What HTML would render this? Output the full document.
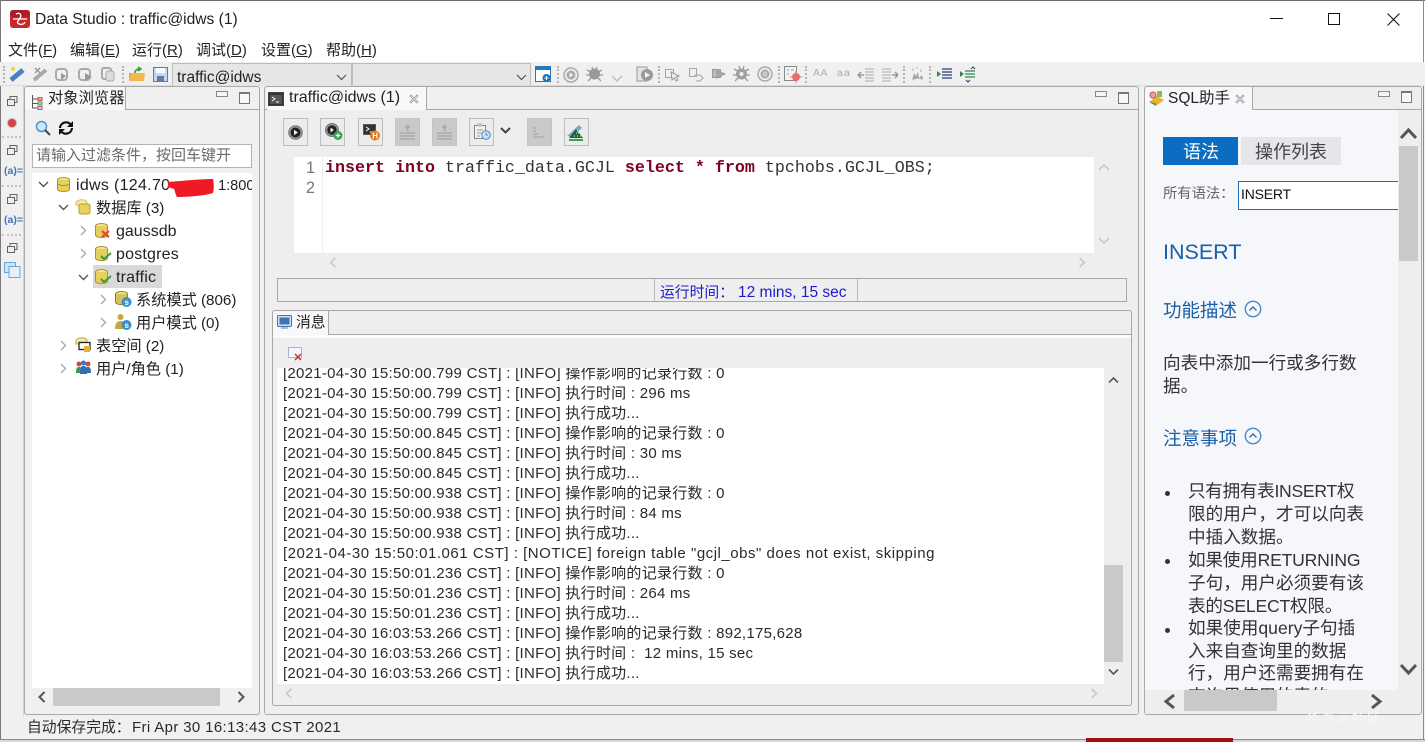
<!DOCTYPE html>
<html lang="zh"><head><meta charset="utf-8"><title>Data Studio</title>
<style>
html,body{margin:0;padding:0;width:1425px;height:742px;overflow:hidden;background:#f0f0f0}
body{position:relative;font-family:"Liberation Sans","Noto Sans CJK SC",sans-serif;font-size:15px;color:#222}
.a{position:absolute}
.t{position:absolute;white-space:nowrap;line-height:20px;height:20px}
.b{position:absolute;box-sizing:border-box;border:1px solid #a8a8a8}
svg{position:absolute;overflow:visible}
.sep{position:absolute;top:66px;width:0;height:17px;border-left:2px dotted #b5b5b5}
.btn{position:absolute;top:118px;width:25px;height:28px;box-sizing:border-box;border:1px solid #bdbdbd;background:#ececec}
.btn.dis{background:#c9c9c9;border-color:#c4c4c4}
.log{position:absolute;left:283px;margin-top:1px;white-space:nowrap;line-height:20px;height:20px;font-size:15px;letter-spacing:.27px;color:#2a2a2a}
.tree{position:absolute;margin-top:1px;white-space:nowrap;line-height:22px;height:22px;font-size:15.2px;color:#222}
.help{position:absolute;margin-top:1px;white-space:nowrap;font-size:17.6px;line-height:23px;color:#333}
.hd{position:absolute;margin-top:1px;white-space:nowrap;font-size:18.5px;line-height:24px;color:#1a5fa8}
.dot{position:absolute;left:1165px;width:5px;height:5px;border-radius:50%;background:#333}
</style></head>
<body>
<!-- window frame -->
<div class="a" style="left:0;top:0;width:1425px;height:1px;background:#6d6d6d"></div>
<div class="a" style="left:0;top:1px;width:1425px;height:61px;background:#fff"></div>
<div class="a" style="left:0;top:0;width:1px;height:742px;background:#7a7a7a"></div>
<div class="a" style="right:1px;top:0;width:1px;height:740px;background:#8a8a8a"></div>
<div class="a" style="left:0;top:739px;width:1425px;height:1px;background:#8a8a8a"></div>
<div class="a" style="left:0;top:740px;width:1425px;height:2px;background:#d8d8d8"></div>
<div class="a" style="left:1086px;top:738px;width:147px;height:4px;background:#a40f12"></div>

<!-- title bar -->
<svg style="left:10px;top:10px" width="20" height="19" viewBox="0 0 20 19"><rect x="0" y="0" width="20" height="18" rx="3" fill="#c8272c"/><rect x="0" y="0" width="20" height="7" rx="3" fill="#a81e22"/><path d="M3 9h14M6 4c4-2 6 1 4 4s-4 5-1 6 5 0 6-2" fill="none" stroke="#fff" stroke-width="1.3"/></svg>
<div class="t" style="left:35px;top:10px;font-size:15.6px">Data Studio : traffic@idws (1)</div>
<div class="a" style="left:1270px;top:18px;width:13px;height:1px;background:#111"></div>
<div class="a" style="left:1328px;top:13px;width:10px;height:10px;border:1px solid #111"></div>
<svg style="left:1387px;top:13px" width="13" height="13"><path d="M0.5 0.5L12.5 12.5M12.5 0.5L0.5 12.5" stroke="#111" stroke-width="1" fill="none"/></svg>

<!-- menu -->
<div class="t" style="left:8px;top:41px">文件(<u>F</u>)</div>
<div class="t" style="left:70px;top:41px">编辑(<u>E</u>)</div>
<div class="t" style="left:132px;top:41px">运行(<u>R</u>)</div>
<div class="t" style="left:196px;top:41px">调试(<u>D</u>)</div>
<div class="t" style="left:261px;top:41px">设置(<u>G</u>)</div>
<div class="t" style="left:326px;top:41px">帮助(<u>H</u>)</div>

<!-- toolbar -->
<div class="a" style="left:0;top:62px;width:1424px;height:23px;background:#f0f0f0"></div>
<div class="a" style="left:0;top:85px;width:1424px;height:1px;background:#dcdcdc"></div>
<div class="sep" style="left:3px"></div>
<svg style="left:9px;top:66px" width="17" height="17"><path d="M2 14L14 4" stroke="#4a7fc0" stroke-width="5"/><circle cx="4" cy="3" r="2" fill="#f4d24a"/></svg>
<svg style="left:32px;top:66px" width="17" height="17"><path d="M2 14L14 4" stroke="#a9a9a9" stroke-width="4"/><path d="M3 2l5 5M8 2L3 7" stroke="#999" stroke-width="1.5"/></svg>
<svg style="left:55px;top:67px" width="16" height="15"><rect x="1" y="2" width="11" height="11" rx="3" fill="none" stroke="#aaa" stroke-width="2"/><path d="M6 6l5 3-5 4z" fill="#999"/></svg>
<svg style="left:78px;top:67px" width="16" height="15"><rect x="1" y="2" width="11" height="11" rx="3" fill="none" stroke="#aaa" stroke-width="2"/><path d="M7 6l7 4-7 4z" fill="#999"/></svg>
<svg style="left:101px;top:67px" width="16" height="15"><rect x="1" y="1" width="9" height="11" rx="2" fill="none" stroke="#aaa" stroke-width="2"/><rect x="5" y="4" width="8" height="10" rx="2" fill="#ddd" stroke="#aaa"/></svg>
<div class="sep" style="left:122px"></div>
<svg style="left:128px;top:66px" width="17" height="16"><path d="M1 7h15v8H1z" fill="#eea128"/><path d="M3 7L1 15h15l1-8z" fill="#f3b84c"/><path d="M7 7c0-3 2-4 5-4M10 1l3 2-3 2" stroke="#3b9a3b" stroke-width="1.5" fill="none"/></svg>
<svg style="left:153px;top:67px" width="15" height="15"><rect x="0.5" y="0.5" width="14" height="14" fill="#c3d7ee" stroke="#5f7ea5"/><rect x="3" y="1" width="9" height="5" fill="#fff"/><rect x="4" y="9" width="7" height="5" fill="#5f7ea5"/></svg>
<div class="a" style="left:172px;top:63px;width:180px;height:23px;box-sizing:border-box;background:#e6e6e6;border:1px solid #bcbcbc;border-bottom:none;overflow:hidden"><div class="t" style="left:4px;top:4px;font-size:15.5px;color:#222">traffic@idws</div></div>
<svg style="left:336px;top:74px" width="11" height="7"><path d="M1 1l4.500 4.500L10 1" fill="none" stroke="#555" stroke-width="1.200"/></svg>
<div class="a" style="left:352px;top:63px;width:179px;height:22px;box-sizing:border-box;background:#e6e6e6;border:1px solid #bcbcbc;border-bottom:none"></div>
<svg style="left:516px;top:74px" width="11" height="7"><path d="M1 1l4.500 4.500L10 1" fill="none" stroke="#555" stroke-width="1.200"/></svg>
<svg style="left:535px;top:66px" width="17" height="17"><rect x="0.500" y="0.500" width="15" height="15" fill="#fff" stroke="#2877b8" stroke-width="1"/><rect x="1" y="1" width="14" height="3" fill="#2877b8"/><circle cx="11.500" cy="12" r="4" fill="#1c77b8"/><path d="M9.500 12h4M11.500 10v4" stroke="#fff"/></svg>
<div class="sep" style="left:557px"></div>
<svg style="left:563px;top:67px" width="16" height="16"><circle cx="8" cy="8" r="7" fill="none" stroke="#a9a9a9" stroke-width="1.500"/><circle cx="8" cy="8" r="4.500" fill="#aaa"/><path d="M6.500 5.500l4 2.500-4 2.500z" fill="#eee"/></svg>
<svg style="left:586px;top:66px" width="17" height="16"><circle cx="8.500" cy="8" r="5.500" fill="#9a9a9a"/><path d="M1 4l4 2M16 4l-4 2M0 9h4M17 9h-4M2 15l3-3M15 15l-3-3M6 1l1 3M11 1l-1 3" stroke="#999" stroke-width="1.300"/></svg>
<svg style="left:611px;top:75px" width="12" height="8"><path d="M1 1l5 5 5-5" fill="none" stroke="#bdbdbd" stroke-width="1.500"/></svg>
<svg style="left:636px;top:66px" width="17" height="17"><rect x="1" y="1" width="10" height="14" fill="#e4e4e4" stroke="#999"/><circle cx="11" cy="9" r="6" fill="#9a9a9a"/><path d="M9 6l5 3-5 3z" fill="#f4f4f4"/></svg>
<div class="sep" style="left:658px"></div>
<svg style="left:665px;top:68px" width="15" height="13"><rect x="0.500" y="1.500" width="8" height="8" fill="none" stroke="#a5a5a5"/><path d="M6 4l8 4-3 1 2 3-2 1-2-3-2 2z" fill="#eee" stroke="#999"/></svg>
<svg style="left:689px;top:68px" width="15" height="14"><rect x="0.500" y="0.500" width="7" height="8" fill="none" stroke="#a5a5a5"/><path d="M5 7h6l3 3-3 3H7" fill="none" stroke="#a5a5a5"/></svg>
<svg style="left:712px;top:68px" width="14" height="12"><rect x="0.500" y="1.500" width="8" height="8" fill="#bbb" stroke="#999"/><path d="M5 3l8 3-8 4z" fill="#aaa" stroke="#999"/></svg>
<svg style="left:733px;top:65px" width="17" height="17"><circle cx="8.500" cy="9" r="5.500" fill="#a0a0a0"/><circle cx="8.500" cy="9" r="2" fill="#eee"/><path d="M1 4l4 2M16 4l-4 2M0 10h4M17 10h-4M2 16l3-3M15 16l-3-3M6 1l1 3M11 1l-1 3" stroke="#999" stroke-width="1.300"/></svg>
<svg style="left:757px;top:66px" width="16" height="16"><circle cx="8" cy="8" r="7" fill="none" stroke="#a9a9a9" stroke-width="1.500"/><circle cx="8" cy="8" r="4.500" fill="#aaa"/><path d="M6.500 5.500h1v5h-1zM8.500 5.500h1v5h-1z" fill="#eee"/></svg>
<div class="sep" style="left:778px"></div>
<svg style="left:784px;top:66px" width="17" height="16"><rect x="0.500" y="0.500" width="12" height="14" fill="#f4f4f4" stroke="#888"/><path d="M3 4h2M3 8h2M7 4h3" stroke="#999"/><circle cx="12" cy="11" r="4" fill="#ea6b6b"/><path d="M12 5v12M6 11h12" stroke="#ea6b6b" stroke-width="1"/></svg>
<div class="sep" style="left:805px"></div>
<div class="t" style="left:813px;top:63px;font-size:10.500px;color:#b0b0b0;letter-spacing:.5px">AA</div>
<div class="t" style="left:837px;top:63px;font-size:10.500px;color:#a8a8a8;letter-spacing:1px">aa</div>
<svg style="left:858px;top:67px" width="17" height="15"><path d="M7 2h9M7 5h9M7 8h9M7 11h9M7 14h9" stroke="#aaa"/><path d="M0 8h6M0 8l3-3M0 8l3 3" stroke="#999" stroke-width="1.500" fill="none"/></svg>
<svg style="left:881px;top:67px" width="17" height="15"><path d="M1 2h9M1 5h9M1 8h9M1 11h9M1 14h9" stroke="#aaa"/><path d="M11 8h6M17 8l-3-3M17 8l-3 3" stroke="#999" stroke-width="1.500" fill="none"/></svg>
<div class="sep" style="left:903px"></div>
<svg style="left:910px;top:67px" width="14" height="15"><path d="M2 14c2-3 9-3 11-1l-1-5-3 3-1-6-2 4-2-3z" fill="#a5a5a5"/><path d="M3 1v3M7 0v2M11 2v3" stroke="#b0b0b0"/></svg>
<div class="sep" style="left:929px"></div>
<svg style="left:937px;top:67px" width="16" height="14"><path d="M0 4l4 3-4 3z" fill="#2b8a55"/><path d="M5 2h10M5 5h10M5 8h10M5 11h10" stroke="#25407e" stroke-width="1.200"/></svg>
<svg style="left:960px;top:66px" width="16" height="16"><path d="M0 5l4 3-4 3z" fill="#2b8a55"/><path d="M5 5h10M5 8h10M5 11h10" stroke="#2b8a55" stroke-width="1.200"/><path d="M11 3l2-2 2 2M6 14l2 2 2-2" stroke="#25407e" fill="none"/></svg>

<!-- left trim -->
<div class="a" style="left:23px;top:86px;width:1px;height:630px;background:#d4d4d4"></div>
<svg style="left:7px;top:96px" width="11" height="10"><rect x="3" y="0.500" width="7" height="6" fill="#eee" stroke="#666"/><rect x="0.500" y="3.500" width="7" height="6" fill="#eee" stroke="#666"/></svg>
<div class="a" style="left:8px;top:119px;width:8px;height:8px;border-radius:50%;background:#d8423f;box-shadow:0 0 0 1px #bbb"></div>
<svg style="left:7px;top:145px" width="11" height="10"><rect x="3" y="0.500" width="7" height="6" fill="#eee" stroke="#666"/><rect x="0.500" y="3.500" width="7" height="6" fill="#eee" stroke="#666"/></svg>
<div class="t" style="left:4px;top:161px;font-size:10.500px;font-weight:bold;color:#3f74b5">(a)=</div>
<svg style="left:7px;top:194px" width="11" height="10"><rect x="3" y="0.500" width="7" height="6" fill="#eee" stroke="#666"/><rect x="0.500" y="3.500" width="7" height="6" fill="#eee" stroke="#666"/></svg>
<div class="t" style="left:4px;top:210px;font-size:10.500px;font-weight:bold;color:#3f74b5">(a)=</div>
<svg style="left:7px;top:243px" width="11" height="10"><rect x="3" y="0.500" width="7" height="6" fill="#eee" stroke="#666"/><rect x="0.500" y="3.500" width="7" height="6" fill="#eee" stroke="#666"/></svg>
<svg style="left:4px;top:262px" width="17" height="16"><rect x="0.500" y="0.500" width="11" height="10" fill="#cfe3f7" stroke="#6ca3d8"/><rect x="5" y="4.500" width="11" height="11" fill="#e5f0fb" stroke="#6ca3d8"/></svg>
<div class="a" style="left:2px;top:136px;width:19px;height:0;border-top:2px dotted #c4c4c4"></div>
<div class="a" style="left:2px;top:185px;width:19px;height:0;border-top:2px dotted #c4c4c4"></div>
<div class="a" style="left:2px;top:234px;width:19px;height:0;border-top:2px dotted #c4c4c4"></div>

<!-- Object browser -->
<div class="b" style="left:24px;top:86px;width:236px;height:629px;border-radius:3px;background:#f0f0f0"></div>
<div class="a" style="left:25px;top:109px;width:234px;height:1px;background:#a8a8a8"></div>
<div class="a" style="left:25px;top:87px;width:101px;height:23px;background:#f8f8f8;border-right:1px solid #a8a8a8;box-sizing:border-box;border-radius:3px 0 0 0"></div>
<svg style="left:31px;top:94px" width="12" height="16"><path d="M1.500 1v13h5M1.500 5h5M1.500 9.500h5" fill="none" stroke="#555"/><rect x="7" y="3.500" width="4" height="3" fill="#e7a0b0" stroke="#c55"/><rect x="7" y="8" width="4" height="3" fill="#a8d8a8" stroke="#4a4"/><rect x="7" y="12.500" width="4" height="3" fill="#e9c9ee" stroke="#a5a"/></svg>
<div class="t" style="left:48px;top:89px;font-size:15.300px;color:#222">对象浏览器</div>
<div class="a" style="left:216px;top:91px;width:10px;height:4px;border:1px solid #888;background:#f4f4f4"></div>
<div class="a" style="left:239px;top:92px;width:9px;height:9px;border:1px solid #777;border-top-width:2px;background:#f7f7f7"></div>
<svg style="left:35px;top:120px" width="16" height="16"><circle cx="6.500" cy="6.500" r="5" fill="#cfe6f8" stroke="#4b94c9" stroke-width="1.500"/><path d="M10 10l5 5" stroke="#444" stroke-width="2"/></svg>
<svg style="left:58px;top:120px" width="16" height="16"><path d="M2 8a6 6 0 0 1 11-3M14 8a6 6 0 0 1-11 3" fill="none" stroke="#111" stroke-width="2.200"/><path d="M15 1v6h-6z" fill="#111"/><path d="M1 15V9h6z" fill="#111"/></svg>
<div class="a" style="left:32px;top:144px;width:220px;height:24px;box-sizing:border-box;background:#fff;border:1px solid #b4b4b4"></div>
<div class="t" style="left:36px;top:146px;font-size:15px;color:#6a6a6a">请输入过滤条件，按回车键开</div>
<div class="a" style="left:32px;top:173px;width:220px;height:515px;background:#fff"></div>
<div class="a" style="left:32px;top:688px;width:220px;height:20px;background:#f0f0f0"></div>
<div class="a" style="left:53px;top:688px;width:167px;height:18px;background:#c9c9c9"></div>
<svg style="left:38px;top:691px" width="8" height="12"><path d="M6.500 1L1.500 6l5 5" fill="none" stroke="#555" stroke-width="2"/></svg>
<svg style="left:237px;top:691px" width="8" height="12"><path d="M1.500 1l5 5-5 5" fill="none" stroke="#555" stroke-width="2"/></svg>

<!-- tree -->
<svg style="left:38px;top:181px" width="11" height="7"><path d="M1 1l4.500 4.500L10 1" fill="none" stroke="#555" stroke-width="1.400"/></svg>
<svg style="left:57px;top:177px" width="13" height="15"><ellipse cx="6.500" cy="3" rx="6" ry="2.500" fill="#f4e48c" stroke="#a8922e"/><path d="M.5 3v9c0 3.500 12 3.500 12 0V3" fill="#e6cf5c" stroke="#a8922e"/><path d="M1 7c2 2 9 2 11 0" fill="none" stroke="#a8922e"/></svg>
<div class="tree" style="left:76px;top:174px;font-size:16px;letter-spacing:.3px">idws (124.70</div>
<svg style="left:166px;top:177px" width="50" height="21"><path d="M2 5C15 4 35 2 47 2c1 4 1 10 0 14-6 2-20 4-36 4C9 17 9 13 8 12L2 10z" fill="#ee1a24"/></svg>
<div class="tree" style="left:218px;top:174px;width:34px;overflow:hidden;font-size:14.600px">1:800</div>
<svg style="left:58px;top:204px" width="11" height="7"><path d="M1 1l4.500 4.500L10 1" fill="none" stroke="#555" stroke-width="1.400"/></svg>
<svg style="left:75px;top:199px" width="16" height="16"><path d="M1 3c3-3 9-3 11 0v3H1z" fill="#f8eaa0" stroke="#d4bd58"/><rect x="4" y="5" width="11" height="10" rx="2" fill="#e8d15c" stroke="#b39c35"/></svg>
<div class="tree" style="left:96px;top:197px">数据库 (3)</div>
<svg style="left:80px;top:225px" width="7" height="11"><path d="M1 1l4.500 4.500L1 10" fill="none" stroke="#aaa" stroke-width="1.400"/></svg>
<svg style="left:95px;top:223px" width="16" height="15"><ellipse cx="6.500" cy="3" rx="6" ry="2.500" fill="#f4e48c" stroke="#a8922e"/><path d="M.5 3v9c0 3.500 12 3.500 12 0V3" fill="#e6cf5c" stroke="#a8922e"/><path d="M7 8l7 6M14 8l-7 6" stroke="#e34a3a" stroke-width="2.200"/></svg>
<div class="tree" style="left:116px;top:220px;font-size:16px">gaussdb</div>
<svg style="left:80px;top:248px" width="7" height="11"><path d="M1 1l4.500 4.500L1 10" fill="none" stroke="#aaa" stroke-width="1.400"/></svg>
<svg style="left:95px;top:246px" width="17" height="15"><ellipse cx="6.500" cy="3" rx="6" ry="2.500" fill="#f4e48c" stroke="#a8922e"/><path d="M.5 3v9c0 3.500 12 3.500 12 0V3" fill="#e6cf5c" stroke="#a8922e"/><path d="M6 10l3 3 7-6" fill="none" stroke="#3a9a3a" stroke-width="2"/></svg>
<div class="tree" style="left:116px;top:243px;font-size:16px;letter-spacing:.2px">postgres</div>
<div class="a" style="left:93px;top:265px;width:69px;height:23px;background:#d9d9d9"></div>
<svg style="left:78px;top:274px" width="11" height="7"><path d="M1 1l4.500 4.500L10 1" fill="none" stroke="#555" stroke-width="1.400"/></svg>
<svg style="left:95px;top:269px" width="17" height="15"><ellipse cx="6.500" cy="3" rx="6" ry="2.500" fill="#f4e48c" stroke="#a8922e"/><path d="M.5 3v9c0 3.500 12 3.500 12 0V3" fill="#e6cf5c" stroke="#a8922e"/><path d="M6 10l3 3 7-6" fill="none" stroke="#3a9a3a" stroke-width="2"/></svg>
<div class="tree" style="left:116px;top:266px;font-size:16px;letter-spacing:.2px">traffic</div>
<svg style="left:100px;top:294px" width="7" height="11"><path d="M1 1l4.500 4.500L1 10" fill="none" stroke="#aaa" stroke-width="1.400"/></svg>
<svg style="left:115px;top:291px" width="17" height="17"><ellipse cx="6.500" cy="3" rx="6" ry="2.500" fill="#f4e48c" stroke="#8f7d2a"/><path d="M.5 3v8c0 3.500 12 3.500 12 0V3" fill="#d8c25a" stroke="#8f7d2a"/><circle cx="11.500" cy="11" r="5" fill="#3e8fc9"/><text x="9.500" y="14" font-size="8" font-weight="bold" fill="#fff" font-family="Liberation Sans">s</text></svg>
<div class="tree" style="left:136px;top:289px">系统模式 (806)</div>
<svg style="left:100px;top:317px" width="7" height="11"><path d="M1 1l4.500 4.500L1 10" fill="none" stroke="#aaa" stroke-width="1.400"/></svg>
<svg style="left:115px;top:314px" width="17" height="17"><circle cx="5.500" cy="3" r="3" fill="#c9a93a"/><path d="M0 15c0-6 2-8 5.500-8s5 2 5 8z" fill="#c9a93a"/><circle cx="11.500" cy="11" r="5" fill="#3e8fc9"/><text x="9.500" y="14" font-size="8" font-weight="bold" fill="#fff" font-family="Liberation Sans">s</text></svg>
<div class="tree" style="left:136px;top:312px">用户模式 (0)</div>
<svg style="left:60px;top:340px" width="7" height="11"><path d="M1 1l4.500 4.500L1 10" fill="none" stroke="#aaa" stroke-width="1.400"/></svg>
<svg style="left:75px;top:337px" width="17" height="16"><path d="M1 3c3-3 9-3 11 0v4H1z" fill="#f8e5a0" stroke="#c9a93a"/><rect x="4" y="5.500" width="11" height="7" fill="#fff" stroke="#222" stroke-width="1.300"/><rect x="9" y="9" width="6" height="6" fill="#e8b030"/></svg>
<div class="tree" style="left:96px;top:335px">表空间 (2)</div>
<svg style="left:60px;top:363px" width="7" height="11"><path d="M1 1l4.500 4.500L1 10" fill="none" stroke="#aaa" stroke-width="1.400"/></svg>
<svg style="left:75px;top:360px" width="17" height="15"><circle cx="4" cy="4" r="2.500" fill="#c84a4a"/><path d="M1 13c0-5 1-6 3-6s3 1 3 6z" fill="#3c9a5a"/><circle cx="13" cy="4" r="2.500" fill="#c84a4a"/><path d="M10 13c0-5 1-6 3-6s3 1 3 6z" fill="#3c6ab0"/><circle cx="8.500" cy="3" r="2.500" fill="#3a7ac0"/><path d="M5 14c0-7 1-8 3.500-8s3.500 1 3.500 8z" fill="#2f6fb5"/></svg>
<div class="tree" style="left:96px;top:358px">用户/角色 (1)</div>

<!-- Editor panel -->
<div class="b" style="left:264px;top:86px;width:875px;height:629px;border-radius:3px;background:#f0f0f0"></div>
<div class="a" style="left:265px;top:109px;width:873px;height:1px;background:#a8a8a8"></div>
<div class="a" style="left:267px;top:87px;width:160px;height:23px;box-sizing:border-box;background:#f8f8f8;border-right:1px solid #a8a8a8;border-radius:3px 0 0 0"></div>
<svg style="left:268px;top:92px" width="16" height="14"><rect x="0.500" y="0.500" width="15" height="13" fill="#333" stroke="#444"/><rect x="2" y="3" width="12" height="9" fill="#555"/><path d="M4 5l3 2-3 2M8 10h3" stroke="#fff" fill="none"/></svg>
<div class="t" style="left:289px;top:88px;font-size:16px;color:#222">traffic@idws (1)</div>
<svg style="left:409px;top:94px" width="10" height="10"><path d="M1 2l1-1 3 3 3-3 1 1-3 3 3 3-1 1-3-3-3 3-1-1 3-3z" fill="none" stroke="#999" stroke-width=".8"/></svg>
<div class="a" style="left:1095px;top:91px;width:10px;height:4px;border:1px solid #888;background:#f4f4f4"></div>
<div class="a" style="left:1118px;top:92px;width:9px;height:9px;border:1px solid #777;border-top-width:2px;background:#f7f7f7"></div>

<div class="a" style="left:265px;top:110px;width:873px;height:604px;background:#eeeeee"></div>

<!-- editor toolbar -->
<div class="btn" style="left:283px"></div>
<svg style="left:288px;top:125px" width="15" height="15"><circle cx="7.500" cy="7.500" r="6.800" fill="#999" stroke="#777"/><circle cx="7.500" cy="7.500" r="5" fill="#222"/><path d="M6 4.800l4 2.700-4 2.700z" fill="#eee"/></svg>
<div class="btn" style="left:320px"></div>
<svg style="left:325px;top:123px" width="19" height="18"><circle cx="7" cy="7" r="6.500" fill="#999" stroke="#777"/><circle cx="7" cy="7" r="4.700" fill="#222"/><path d="M5.500 4.500l3.500 2.500-3.500 2.500z" fill="#eee"/><circle cx="13" cy="12.500" r="4.500" fill="#37a24f"/><path d="M10.800 12.500h4.400M13 10.300v4.400" stroke="#fff" stroke-width="1.200"/></svg>
<div class="btn" style="left:358px"></div>
<svg style="left:363px;top:124px" width="19" height="18"><rect x="0.500" y="0.500" width="12" height="10" fill="#333" stroke="#555"/><path d="M3 3l3 2-3 2M7 8h3" stroke="#fff" fill="none"/><circle cx="12" cy="11.500" r="5" fill="#e57a1c"/><text x="9.300" y="14.500" font-size="8" font-weight="bold" fill="#fff" font-family="Liberation Sans">H</text></svg>
<div class="btn dis" style="left:395px"></div>
<svg style="left:399px;top:124px" width="17" height="17"><path d="M1 9h15M1 12h15M1 15h15" stroke="#aaa" stroke-width="1.500"/><path d="M8.500 0l3 4h-6z" fill="#aaa"/><rect x="7.500" y="3" width="2" height="4" fill="#aaa"/></svg>
<div class="btn dis" style="left:432px"></div>
<svg style="left:436px;top:124px" width="17" height="17"><path d="M1 9h15M1 12h15M1 15h15" stroke="#aaa" stroke-width="1.500"/><path d="M8.500 0l3 4h-6z" fill="#aaa"/><rect x="7.500" y="3" width="2" height="4" fill="#aaa"/></svg>
<div class="btn" style="left:469px"></div>
<svg style="left:474px;top:123px" width="17" height="18"><rect x="0.500" y="2.500" width="11" height="13" fill="#f2f2f2" stroke="#888"/><path d="M3 7h6M3 10h5M3 13h3" stroke="#999"/><rect x="3" y="0.500" width="5" height="3" fill="#bbb"/><circle cx="12" cy="12" r="4.200" fill="#cfe4f7" stroke="#4a8ccc"/><path d="M12 9.500V12h2" stroke="#4a8ccc" fill="none"/></svg>
<svg style="left:500px;top:127px" width="11" height="8"><path d="M1 1l4.500 4.500L10 1" fill="none" stroke="#444" stroke-width="2"/></svg>
<div class="btn dis" style="left:527px"></div>
<svg style="left:531px;top:125px" width="16" height="15"><path d="M2 3h3M2 6h3M2 9h5M2 12h11" stroke="#b0b0b0" stroke-width="1.500"/></svg>
<div class="btn" style="left:564px"></div>
<svg style="left:566px;top:123px" width="20" height="20"><path d="M1 13L13 2l3 3L6 14z" fill="#7ea4d6"/><path d="M3 15l7-9 7 9z" fill="#16692c"/><path d="M8 13h1M11 13h1M14 13h1M10 10h1M12 10h1M11 8h1" stroke="#fff"/><rect x="3" y="16" width="14" height="2" fill="#37a24f"/></svg>

<!-- sql editor -->
<div class="a" style="left:294px;top:157px;width:800px;height:96px;background:#fff"></div>
<div class="a" style="left:322px;top:157px;width:1px;height:96px;background:#eeeeee"></div>
<div class="a" style="left:301px;top:158px;width:14px;font:16.500px/20px 'Liberation Sans',sans-serif;color:#777;text-align:right">1<br>2</div>
<div class="a" style="left:325px;top:159px;white-space:pre;font:16.670px/20px 'Liberation Mono',monospace;color:#333"><b style="color:#7f0020">insert</b> <b style="color:#7f0020">into</b> traffic_data.GCJL <b style="color:#7f0020">select</b> <b style="color:#7f0020">*</b> <b style="color:#7f0020">from</b> tpchobs.GCJL_OBS;</div>
<svg style="left:1098px;top:163px" width="12" height="8"><path d="M1 7l5-5 5 5" fill="none" stroke="#c8c8c8" stroke-width="1.600"/></svg>
<svg style="left:1098px;top:237px" width="12" height="8"><path d="M1 1l5 5 5-5" fill="none" stroke="#c8c8c8" stroke-width="1.600"/></svg>
<svg style="left:329px;top:257px" width="8" height="11"><path d="M6.500 1L1.500 5.500l5 4.500" fill="none" stroke="#c8c8c8" stroke-width="1.600"/></svg>
<svg style="left:1078px;top:257px" width="8" height="11"><path d="M1.500 1l5 4.500-5 4.500" fill="none" stroke="#c8c8c8" stroke-width="1.600"/></svg>
<!-- status strip -->
<div class="b" style="left:277px;top:278px;width:850px;height:24px;background:#eeeeee"></div>
<div class="a" style="left:654px;top:279px;width:1px;height:22px;background:#b8b8b8"></div>
<div class="a" style="left:857px;top:279px;width:1px;height:22px;background:#b8b8b8"></div>
<div class="t" style="left:660px;top:283px;font-size:14.800px;color:#1c1ccc">运行时间：</div>
<div class="t" style="left:738px;top:283px;font-size:15.500px;color:#1c1ccc">12 mins, 15 sec</div>

<!-- Messages panel -->
<div class="b" style="left:272px;top:310px;width:860px;height:396px;border-radius:3px;background:#eeeeee"></div>
<div class="a" style="left:273px;top:334px;width:858px;height:1px;background:#a8a8a8"></div>
<div class="a" style="left:273px;top:311px;width:56px;height:24px;box-sizing:border-box;background:#f8f8f8;border-right:1px solid #a8a8a8;border-radius:3px 0 0 0"></div>
<div class="a" style="left:273px;top:335px;width:858px;height:3px;background:#fbfbfb"></div>
<svg style="left:277px;top:315px" width="15" height="15"><rect x="0.500" y="0.500" width="14" height="11" rx="1" fill="#cfe0f2" stroke="#3e76b5"/><rect x="2.500" y="2.500" width="10" height="7" fill="#3e76b5"/><rect x="4" y="12" width="7" height="2" fill="#bbb"/></svg>
<div class="t" style="left:296px;top:313px;font-size:14.800px;color:#222">消息</div>
<svg style="left:288px;top:347px" width="15" height="14"><rect x="0.500" y="0.500" width="13" height="10" fill="#f4f7fb" stroke="#9db6d2"/><path d="M7 7l6 6M13 7l-6 6" stroke="#c62f2f" stroke-width="1.500"/></svg>

<div class="a" style="left:277px;top:368px;width:827px;height:316px;background:#fff"></div>
<div class="a" style="left:277px;top:368px;width:827px;height:316px;overflow:hidden">
<div class="log" style="left:6px;top:-5px">[2021-04-30 15:50:00.799 CST] : [INFO] 操作影响的记录行数 : 0</div>
<div class="log" style="left:6px;top:15px">[2021-04-30 15:50:00.799 CST] : [INFO] 执行时间 : 296 ms</div>
<div class="log" style="left:6px;top:35px">[2021-04-30 15:50:00.799 CST] : [INFO] 执行成功...</div>
<div class="log" style="left:6px;top:55px">[2021-04-30 15:50:00.845 CST] : [INFO] 操作影响的记录行数 : 0</div>
<div class="log" style="left:6px;top:75px">[2021-04-30 15:50:00.845 CST] : [INFO] 执行时间 : 30 ms</div>
<div class="log" style="left:6px;top:95px">[2021-04-30 15:50:00.845 CST] : [INFO] 执行成功...</div>
<div class="log" style="left:6px;top:115px">[2021-04-30 15:50:00.938 CST] : [INFO] 操作影响的记录行数 : 0</div>
<div class="log" style="left:6px;top:135px">[2021-04-30 15:50:00.938 CST] : [INFO] 执行时间 : 84 ms</div>
<div class="log" style="left:6px;top:155px">[2021-04-30 15:50:00.938 CST] : [INFO] 执行成功...</div>
<div class="log" style="left:6px;top:175px;letter-spacing:.52px">[2021-04-30 15:50:01.061 CST] : [NOTICE] foreign table "gcjl_obs" does not exist, skipping</div>
<div class="log" style="left:6px;top:195px">[2021-04-30 15:50:01.236 CST] : [INFO] 操作影响的记录行数 : 0</div>
<div class="log" style="left:6px;top:215px">[2021-04-30 15:50:01.236 CST] : [INFO] 执行时间 : 264 ms</div>
<div class="log" style="left:6px;top:235px">[2021-04-30 15:50:01.236 CST] : [INFO] 执行成功...</div>
<div class="log" style="left:6px;top:255px">[2021-04-30 16:03:53.266 CST] : [INFO] 操作影响的记录行数 : 892,175,628</div>
<div class="log" style="left:6px;top:275px">[2021-04-30 16:03:53.266 CST] : [INFO] 执行时间 :&nbsp; 12 mins, 15 sec</div>
<div class="log" style="left:6px;top:295px">[2021-04-30 16:03:53.266 CST] : [INFO] 执行成功...</div>
</div>
<div class="a" style="left:1104px;top:565px;width:19px;height:97px;background:#c9c9c9"></div>
<svg style="left:1108px;top:376px" width="11" height="8"><path d="M1 6.500L5.500 2 10 6.500" fill="none" stroke="#555" stroke-width="1.600"/></svg>
<svg style="left:1108px;top:668px" width="11" height="8"><path d="M1 1.500L5.500 6 10 1.500" fill="none" stroke="#555" stroke-width="1.600"/></svg>
<svg style="left:285px;top:688px" width="8" height="11"><path d="M6.500 1L1.500 5.500l5 4.500" fill="none" stroke="#c8c8c8" stroke-width="1.600"/></svg>
<svg style="left:1090px;top:688px" width="8" height="11"><path d="M1.500 1l5 4.500-5 4.500" fill="none" stroke="#c8c8c8" stroke-width="1.600"/></svg>

<!-- SQL helper panel -->
<div class="b" style="left:1144px;top:86px;width:278px;height:629px;border-radius:3px;background:#eeeeee"></div>
<div class="a" style="left:1145px;top:109px;width:276px;height:1px;background:#a8a8a8"></div>
<div class="a" style="left:1145px;top:87px;width:108px;height:24px;box-sizing:border-box;background:#f6f8fc;border-right:1px solid #a8a8a8;border-radius:3px 0 0 0"></div>
<svg style="left:1148px;top:90px" width="17" height="17"><path d="M1 12l7 4 8-6-7-4z" fill="#e6b23c"/><path d="M1 12l7 4v-3z" fill="#6d9a2e"/><circle cx="5" cy="5" r="3" fill="#e8a0a0" stroke="#b55"/><rect x="9" y="1" width="5" height="6" fill="#8bbf4a"/></svg>
<div class="t" style="left:1168px;top:89px;font-size:15.500px;color:#222">SQL助手</div>
<svg style="left:1235px;top:94px" width="10" height="10"><path d="M1 2l1-1 3 3 3-3 1 1-3 3 3 3-1 1-3-3-3 3-1-1 3-3z" fill="none" stroke="#999" stroke-width=".8"/></svg>
<div class="a" style="left:1378px;top:91px;width:10px;height:4px;border:1px solid #888;background:#f4f4f4"></div>
<div class="a" style="left:1401px;top:91px;width:9px;height:9px;border:1px solid #777;border-top-width:2px;background:#f7f7f7"></div>

<div class="a" style="left:1145px;top:110px;width:253px;height:580px;background:#f5f7fb"></div>
<div class="a" style="left:1398px;top:110px;width:22px;height:580px;background:#eeeeee"></div>
<div class="a" style="left:1399px;top:146px;width:19px;height:115px;background:#c9c9c9"></div>
<svg style="left:1399px;top:127px" width="19" height="13"><path d="M2 11l7.500-8L17 11" fill="none" stroke="#555" stroke-width="3"/></svg>
<svg style="left:1399px;top:663px" width="19" height="13"><path d="M2 2l7.500 8L17 2" fill="none" stroke="#555" stroke-width="3"/></svg>
<div class="a" style="left:1163px;top:137px;width:75px;height:28px;background:#0a6dc2"></div>
<div class="t" style="left:1183px;top:142px;font-size:18px;color:#fff">语法</div>
<div class="a" style="left:1241px;top:137px;width:100px;height:28px;background:#e4e6ea"></div>
<div class="t" style="left:1255px;top:142px;font-size:18px;color:#444">操作列表</div>
<div class="t" style="left:1163px;top:184px;font-size:14.300px;color:#666">所有语法：</div>
<div class="a" style="left:1238px;top:181px;width:160px;height:29px;box-sizing:border-box;background:#fff;border:1px solid #1d6db5;border-right:none"></div>
<div class="t" style="left:1241px;top:184px;font-size:14px;letter-spacing:-.2px;color:#111">INSERT</div>
<div class="a" style="left:1163px;top:239px;white-space:nowrap;font-size:21.500px;line-height:26px;color:#1a5fa8">INSERT</div>
<div class="hd" style="left:1163px;top:298px">功能描述</div>
<svg style="left:1244px;top:300px" width="18" height="18"><circle cx="9" cy="9" r="7.700" fill="none" stroke="#4c88c8" stroke-width="1.400"/><path d="M5.500 10.500L9 7l3.500 3.500" fill="none" stroke="#2e6fb0" stroke-width="1.400"/></svg>
<div class="help" style="left:1163px;top:351px">向表中添加一行或多行数</div>
<div class="help" style="left:1163px;top:374px">据。</div>
<div class="hd" style="left:1163px;top:426px">注意事项</div>
<svg style="left:1244px;top:427px" width="18" height="18"><circle cx="9" cy="9" r="7.700" fill="none" stroke="#4c88c8" stroke-width="1.400"/><path d="M5.500 10.500L9 7l3.500 3.500" fill="none" stroke="#2e6fb0" stroke-width="1.400"/></svg>
<div class="a" style="left:1145px;top:470px;width:253px;height:220px;overflow:hidden">
<div class="dot" style="left:20px;top:21px"></div>
<div class="help" style="left:43px;top:9px;letter-spacing:-.3px">只有拥有表INSERT权</div>
<div class="help" style="left:43px;top:32px">限的用户，才可以向表</div>
<div class="help" style="left:43px;top:55px">中插入数据。</div>
<div class="dot" style="left:20px;top:89px"></div>
<div class="help" style="left:43px;top:78px;letter-spacing:-.2px">如果使用RETURNING</div>
<div class="help" style="left:43px;top:101px">子句，用户必须要有该</div>
<div class="help" style="left:43px;top:124px;letter-spacing:-.2px">表的SELECT权限。</div>
<div class="dot" style="left:20px;top:158px"></div>
<div class="help" style="left:43px;top:146px">如果使用query子句插</div>
<div class="help" style="left:43px;top:169px">入来自查询里的数据</div>
<div class="help" style="left:43px;top:191px">行，用户还需要拥有在</div>
<div class="help" style="left:43px;top:214px">查询里使用的表的</div>
</div>
<div class="a" style="left:1145px;top:690px;width:275px;height:24px;background:#eeeeee"></div>
<div class="a" style="left:1184px;top:690px;width:93px;height:21px;background:#c9c9c9"></div>
<svg style="left:1162px;top:693px" width="14" height="17"><path d="M12 2L4 8.500l8 6.500" fill="none" stroke="#555" stroke-width="3"/></svg>
<svg style="left:1370px;top:693px" width="14" height="17"><path d="M2 2l8 6.500L2 15" fill="none" stroke="#555" stroke-width="3"/></svg>
<div class="t" style="left:1307px;top:708px;font-size:12px;color:#f6f6f6;letter-spacing:3px">华为云社区</div>

<!-- status bar -->
<div class="t" style="left:27px;top:718px;font-size:14.800px;color:#2a2a2a">自动保存完成：</div>
<div class="t" style="left:132px;top:718px;font-size:15px;letter-spacing:.36px;color:#2a2a2a">Fri Apr 30 16:13:43 CST 2021</div>
</body></html>
